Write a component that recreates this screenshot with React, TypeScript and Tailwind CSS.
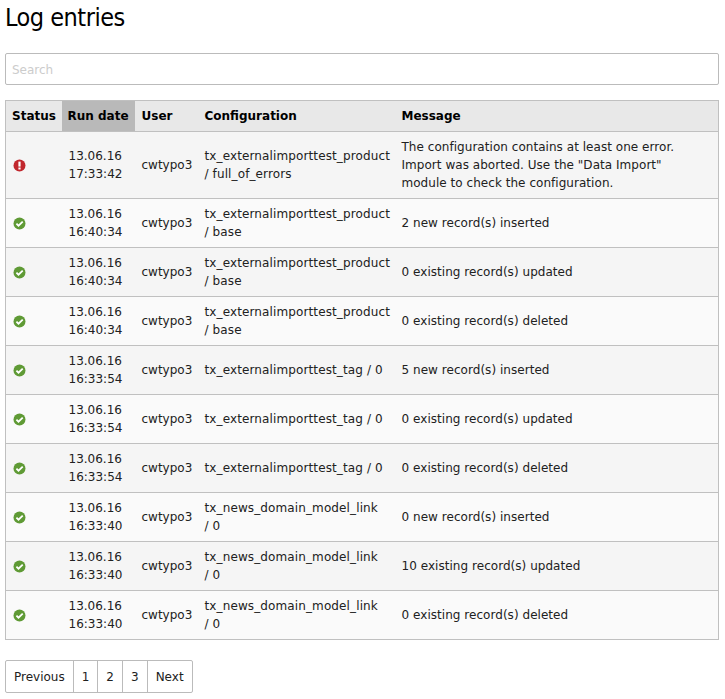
const ROWS = [
  { ok: false, date: "13.06.16", time: "17:33:42", config: ["tx_externalimporttest_product", "/ full_of_errors"], message: ["The configuration contains at least one error.", 'Import was aborted. Use the "Data Import"', "module to check the configuration."] },
  { ok: true, date: "13.06.16", time: "16:40:34", config: ["tx_externalimporttest_product", "/ base"], message: ["2 new record(s) inserted"] },
  { ok: true, date: "13.06.16", time: "16:40:34", config: ["tx_externalimporttest_product", "/ base"], message: ["0 existing record(s) updated"] },
  { ok: true, date: "13.06.16", time: "16:40:34", config: ["tx_externalimporttest_product", "/ base"], message: ["0 existing record(s) deleted"] },
  { ok: true, date: "13.06.16", time: "16:33:54", config: ["tx_externalimporttest_tag / 0"], message: ["5 new record(s) inserted"] },
  { ok: true, date: "13.06.16", time: "16:33:54", config: ["tx_externalimporttest_tag / 0"], message: ["0 existing record(s) updated"] },
  { ok: true, date: "13.06.16", time: "16:33:54", config: ["tx_externalimporttest_tag / 0"], message: ["0 existing record(s) deleted"] },
  { ok: true, date: "13.06.16", time: "16:33:40", config: ["tx_news_domain_model_link", "/ 0"], message: ["0 new record(s) inserted"] },
  { ok: true, date: "13.06.16", time: "16:33:40", config: ["tx_news_domain_model_link", "/ 0"], message: ["10 existing record(s) updated"] },
  { ok: true, date: "13.06.16", time: "16:33:40", config: ["tx_news_domain_model_link", "/ 0"], message: ["0 existing record(s) deleted"] },
];

const PAGES = ["Previous", "1", "2", "3", "Next"];

const StatusIcon = ({ ok }: { ok: boolean }) =>
  ok ? (
    <svg width="13" height="13" viewBox="0 0 13 13" className="block">
      <circle cx="6.5" cy="6.5" r="6" fill="#5f9a35" />
      <path d="M3.4 6.6 5.5 8.7 9.7 4.6" fill="none" stroke="#fff" strokeWidth="1.8" />
    </svg>
  ) : (
    <svg width="13" height="13" viewBox="0 0 13 13" className="block">
      <circle cx="6.5" cy="6.5" r="6" fill="#c1272d" />
      <rect x="5.4" y="2.6" width="2.2" height="5" fill="#fff" />
      <rect x="5.4" y="8.5" width="2.2" height="2" fill="#fff" />
    </svg>
  );

export default function App() {
  return (
    <div className="min-h-[699px] bg-white px-[5px] text-[12px] leading-[18px] text-[#212121] font-['DejaVu_Sans','Liberation_Sans',sans-serif]">
      <h1 className="h-[53px] pt-[2px] text-[25px] leading-[32px] tracking-[-0.5px] text-black font-['DejaVu_Sans_Condensed','Liberation_Sans_Narrow','Liberation_Sans',sans-serif]">
        Log entries
      </h1>
      <input
        placeholder="Search"
        className="block h-[32px] w-[714px] rounded-[2px] border border-[#bbbbbb] bg-white px-[6px] pt-[1px] text-[12px] placeholder:text-[#cccccc] outline-none"
      />
      <table className="mt-[15px] w-[714px] table-fixed border-collapse border border-[#c0c0c0]">
        <thead>
          <tr className="h-[31px] bg-[#e8e8e8] text-left text-black whitespace-nowrap">
            <th className="w-[56px] px-[6px] py-0 font-bold">Status</th>
            <th className="w-[73px] bg-[#b9b9b9] pl-[6px] pr-0 py-0 font-bold">Run date</th>
            <th className="w-[63px] pl-[7px] pr-0 py-0 font-bold">User</th>
            <th className="w-[197px] pl-[7px] pr-0 py-0 font-bold">Configuration</th>
            <th className="pl-[7px] pr-0 py-0 font-bold">Message</th>
          </tr>
        </thead>
        <tbody>
          {ROWS.map((row, i) => (
            <tr key={i} className={`border-t border-[#c0c0c0] ${i % 2 === 0 ? "bg-[#f5f5f5]" : "bg-[#fafafa]"}`}>
              <td className="px-[7px] py-[6px]">
                <StatusIcon ok={row.ok} />
              </td>
              <td className="pl-[7px] pr-0 py-[6px]">
                <div>{row.date}</div>
                <div>{row.time}</div>
              </td>
              <td className="pl-[7px] pr-0 py-[6px]">cwtypo3</td>
              <td className="pl-[7px] pr-0 py-[6px] whitespace-nowrap tracking-[0.12px]">
                {row.config.map((line) => (
                  <div key={line} className={row.config.length === 1 ? "leading-[36px]" : ""}>
                    {line}
                  </div>
                ))}
              </td>
              <td className="pl-[7px] pr-0 py-[6px] whitespace-nowrap tracking-[0.04px]">
                {row.message.map((line) => (
                  <div key={line}>{line}</div>
                ))}
              </td>
            </tr>
          ))}
        </tbody>
      </table>
      <nav className="mt-[20px] flex h-[33px] w-fit rounded-[2px] border border-[#bbbbbb]">
        {PAGES.map((page, i) => (
          <a
            key={page}
            className={`flex items-center px-[8px] text-[#212121] ${i > 0 ? "border-l border-[#bbbbbb]" : ""}`}
          >
            {page}
          </a>
        ))}
      </nav>
    </div>
  );
}
